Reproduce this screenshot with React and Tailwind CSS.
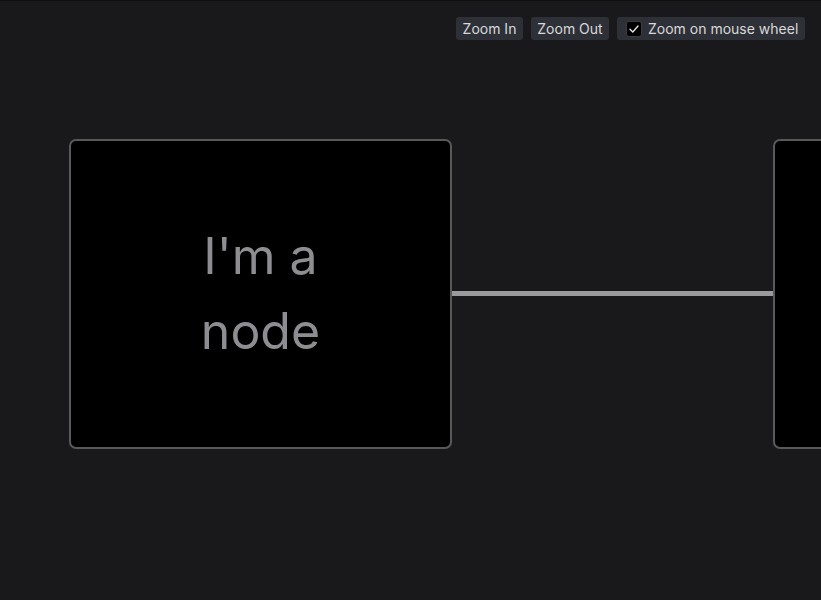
import React from "react";

export default function App() {
  return (
    <div
      className="relative w-full h-[600px] overflow-hidden bg-[#19191b] border-t border-[#0f0f11]"
      style={{ fontFamily: "Inter, 'Noto Sans', sans-serif" }}
    >
      {/* edge */}
      <div className="absolute left-[452px] top-[290px] w-[321px] h-[5px] bg-[#9a9a9d]" />

      {/* node 1 */}
      <div className="absolute left-[69px] top-[138px] w-[383px] h-[310px] rounded-[7px] border-2 border-[#59595c] bg-black flex items-center justify-center">
        <div className="text-[50px] leading-[75px] text-[#8e8e92] text-center w-[130px]">
          I'm a node
        </div>
      </div>

      {/* node 2 */}
      <div className="absolute left-[773px] top-[138px] w-[383px] h-[310px] rounded-[7px] border-2 border-[#59595c] bg-black" />

      {/* toolbar */}
      <div className="absolute top-[16px] right-[16px] flex items-center gap-2 text-[14px] text-[#d8d8d8]">
        <button className="h-[23px] w-[67px] flex items-center justify-center rounded-[3px] bg-[#2e3038] leading-none">Zoom In</button>
        <button className="h-[23px] w-[78px] flex items-center justify-center rounded-[3px] bg-[#2e3038] leading-none">Zoom Out</button>
        <label className="h-[23px] w-[188px] pl-[9px] rounded-[3px] bg-[#2e3038] flex items-center gap-[6px] leading-none">
          <span className="w-[16px] h-[16px] rounded-[3px] bg-black border border-[#3a3a3f] flex items-center justify-center">
            <svg width="12" height="12" viewBox="0 0 12 12" fill="none">
              <path d="M2 6.2 L4.8 9 L10 3" stroke="#e6e6e6" strokeWidth="1.3" strokeLinecap="round" strokeLinejoin="round" />
            </svg>
          </span>
          Zoom on mouse wheel
        </label>
      </div>
    </div>
  );
}
